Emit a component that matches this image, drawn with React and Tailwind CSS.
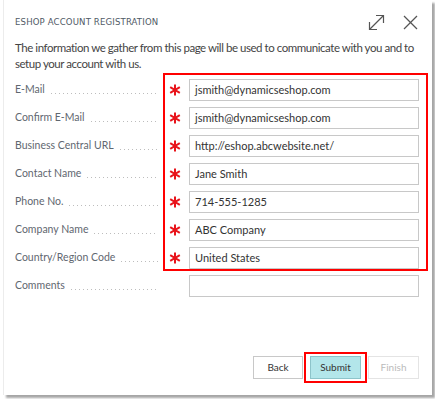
import React from "react";

const Star = () => (
  <svg width="12" height="12" viewBox="0 0 12 12" className="block">
    <g stroke="#e8141b" strokeWidth="2" strokeLinecap="butt">
      <line x1="6" y1="0.5" x2="6" y2="11.5" />
      <line x1="1.2" y1="3.2" x2="10.8" y2="8.8" />
      <line x1="1.2" y1="8.8" x2="10.8" y2="3.2" />
    </g>
  </svg>
);

const rows = [
  ["E-Mail", "jsmith@dynamicseshop.com", true],
  ["Confirm E-Mail", "jsmith@dynamicseshop.com", true],
  ["Business Central URL", "http://eshop.abcwebsite.net/", true],
  ["Contact Name", "Jane Smith", true],
  ["Phone No.", "714-555-1285", true],
  ["Company Name", "ABC Company", true],
  ["Country/Region Code", "United States", true],
  ["Comments", "", false],
];

export default function App() {
  return (
    <div className="w-[435px] h-[399px] bg-white relative overflow-hidden" style={{ fontFamily: 'Lato, "Noto Sans", sans-serif' }}>
      <div className="absolute left-[3px] top-0 w-[429px] h-[395px] bg-white border-l border-[#ececec] shadow-[3px_3px_2px_rgba(0,0,0,0.35)] flex flex-col">
        <div className="flex items-center h-[40px] pt-[4px] pl-[11px] pr-[14px]">
          <div className="text-[9.5px] tracking-[0.15px] text-[#505a66]" style={{ fontFamily: '"DejaVu Sans Condensed", "Liberation Sans", sans-serif' }}>
            ESHOP ACCOUNT REGISTRATION
          </div>
          <div className="ml-auto flex items-center gap-[18px]">
            <svg width="17" height="17" viewBox="0 0 17 17" fill="none" stroke="#555" strokeWidth="1.2">
              <line x1="1.5" y1="15.5" x2="15.5" y2="1.5" />
              <polyline points="8,1.5 15.5,1.5 15.5,9" />
              <polyline points="1.5,8 1.5,15.5 9,15.5" />
            </svg>
            <svg width="15" height="15" viewBox="0 0 15 15" fill="none" stroke="#555" strokeWidth="1.2">
              <line x1="1" y1="1" x2="14" y2="14" />
              <line x1="14" y1="1" x2="1" y2="14" />
            </svg>
          </div>
        </div>
        <p className="pl-[11px] pr-[5px] text-[11.5px] leading-[16px] tracking-[-0.45px] text-[#444]">
          The information we gather from this page will be used to communicate with you and to setup your account with us.
        </p>
        <div className="relative mt-[4px] flex flex-col">
          {rows.map(([label, value, req]) => (
            <div key={label} className="flex items-center h-[28px] pl-[11px]">
              <div className="w-[146px] flex items-end text-[10.5px] text-[#5f6770] pr-[3px]">
                <span className="whitespace-nowrap">{label}</span>
                <span className="flex-1 ml-[6px] mb-[4px] h-px bg-[linear-gradient(to_right,#bdbdbd_1px,transparent_1px)] bg-[length:4px_1px]" />
              </div>
              <div className="w-[28px] flex justify-center">{req ? <Star /> : null}</div>
              <div className="w-[230px] h-[22px] border border-[#c8c8c8] flex items-center px-[5px] text-[11px] text-[#333]">
                {value}
              </div>
            </div>
          ))}
          <div className="absolute left-[159px] top-[-3px] w-[265px] h-[198px] border-[2px] border-[#ff0000]" />
        </div>
        <div className="mt-auto mb-[16px] flex justify-end pr-[13px] text-[10px]">
          <div className="w-[50px] h-[23px] border border-[#c8c8c8] bg-white flex items-center justify-center text-[#333]">Back</div>
          <div className="relative ml-[7px] mr-[7px]">
            <div className="w-[51px] h-[23px] border border-[#8dc4ca] bg-[#b3e6ea] flex items-center justify-center text-[#333]">Submit</div>
            <div className="absolute left-[-6px] top-[-4px] w-[63px] h-[31px] border-[2px] border-[#ff0000]" />
          </div>
          <div className="w-[51px] h-[23px] border border-[#e4e4e4] bg-white flex items-center justify-center text-[#bbb]">Finish</div>
        </div>
      </div>
    </div>
  );
}
